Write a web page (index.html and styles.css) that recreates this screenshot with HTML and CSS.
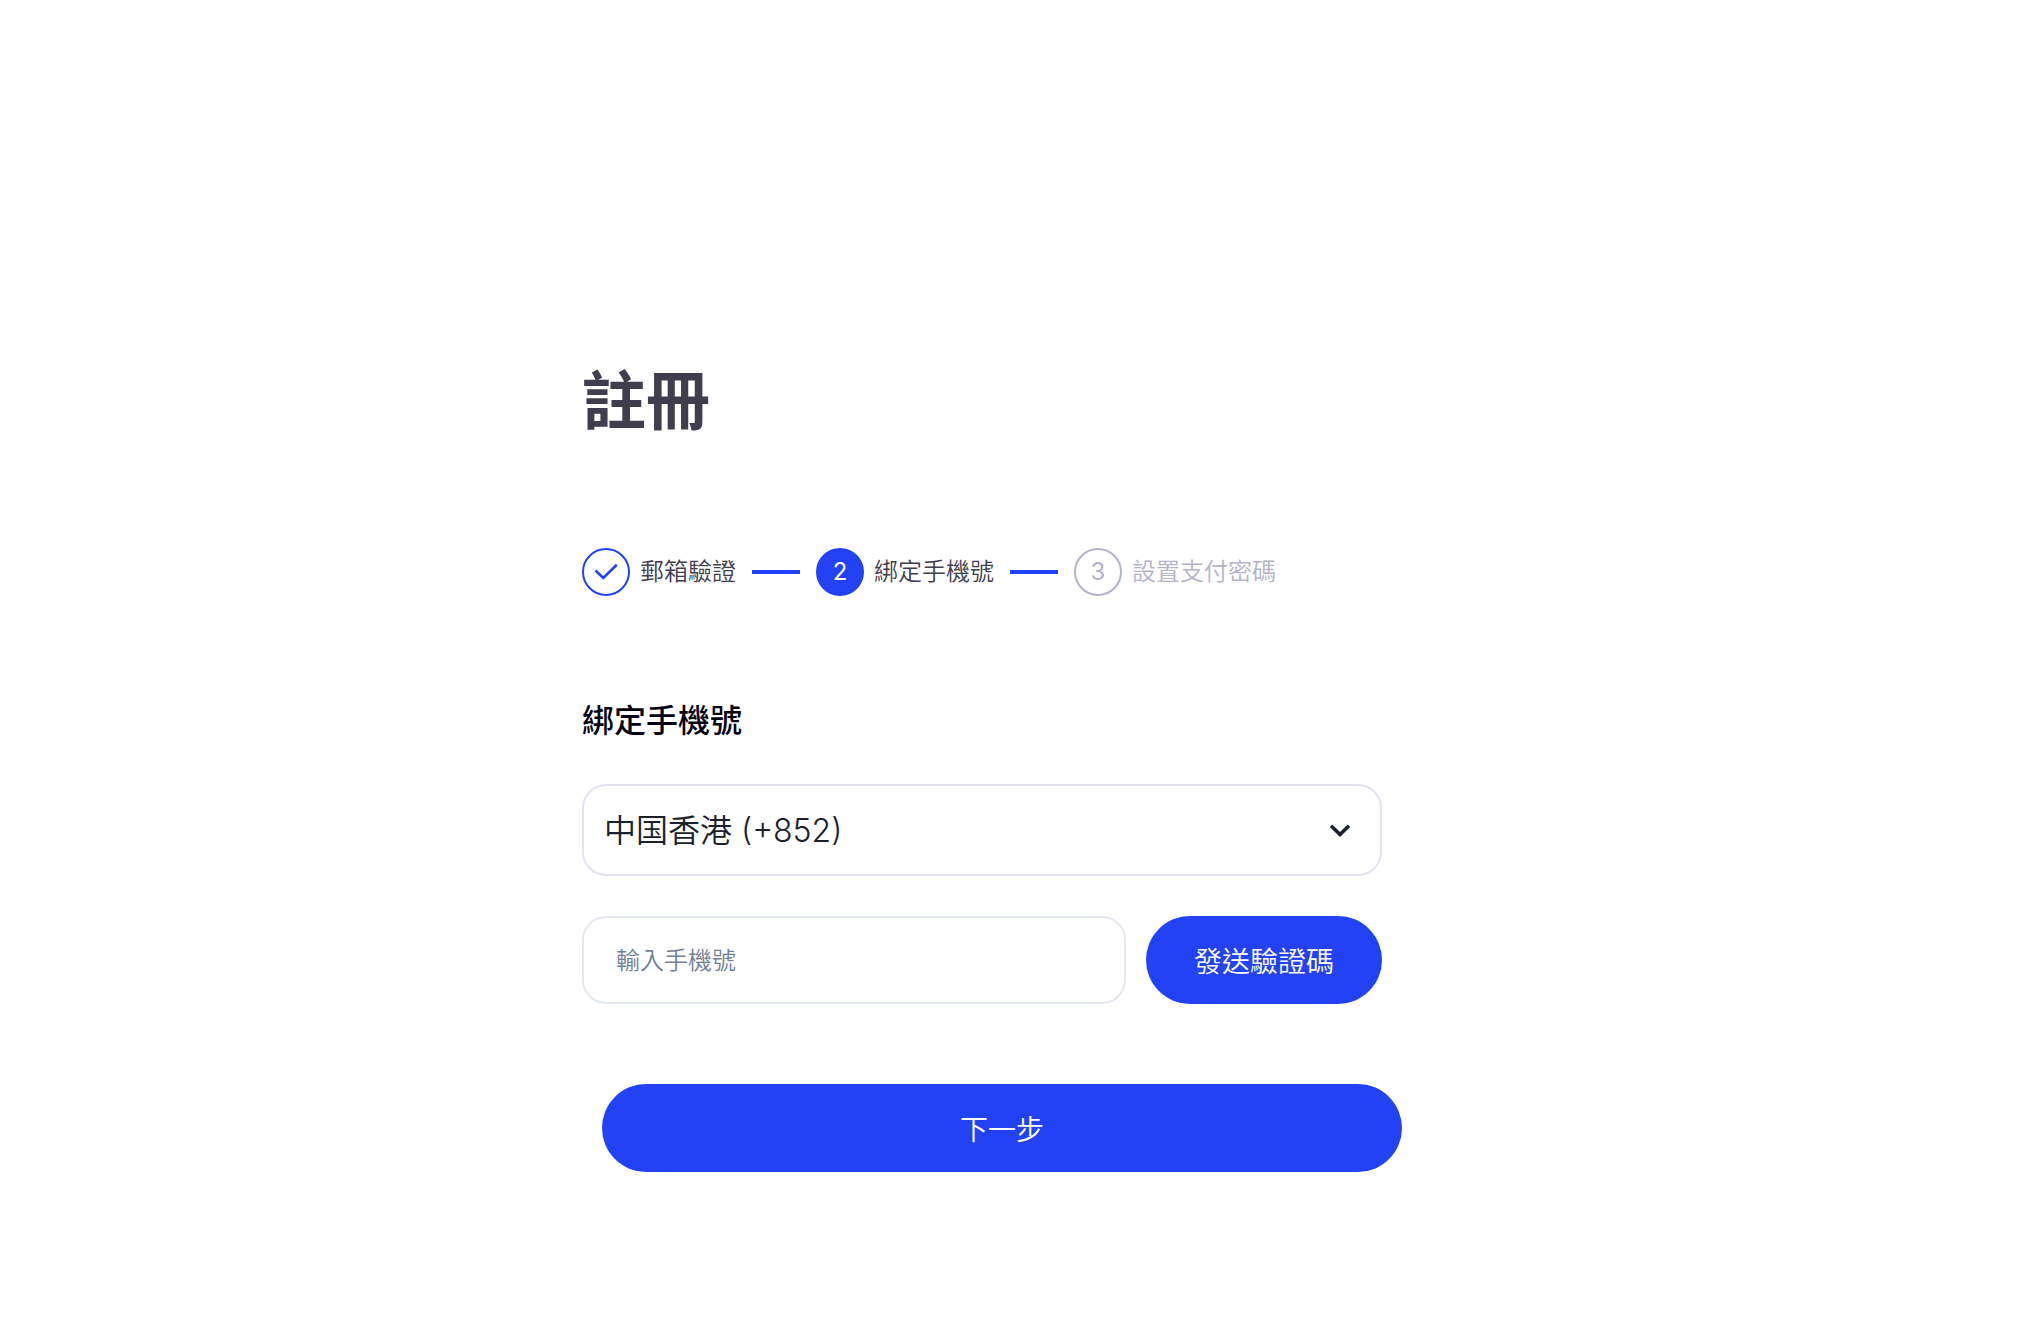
FILE: index.html
```html
<!DOCTYPE html>
<html lang="zh-Hant">
<head>
<meta charset="UTF-8">
<meta name="viewport" content="width=device-width, initial-scale=1">
<title>註冊</title>
<link rel="stylesheet" href="styles.css">
</head>
<body>

<main class="register">
    <h1 class="title">註冊</h1>

    <ol class="steps">
        <li class="step done">
            <span class="circle">
                <svg width="24" height="18" viewBox="0 0 24 18" fill="none" stroke="currentColor" stroke-width="2.6">
                    <path d="M1.5 7.5 9.3 15 22.8 1.8"/>
                </svg>
            </span>
            <span>郵箱驗證</span>
        </li>
        <li class="step active">
            <span class="circle">2</span>
            <span>綁定手機號</span>
        </li>
        <li class="step">
            <span class="circle">3</span>
            <span>設置支付密碼</span>
        </li>
    </ol>

    <form class="form">
        <h2 class="subtitle">綁定手機號</h2>

        <div class="select-wrap">
            <select class="field region" id="region" name="region" aria-label="國家或地區">
                <option value="852">中国香港 (+852)</option>
            </select>
            <svg class="arrow" width="22" height="16" viewBox="0 0 22 16" fill="none" stroke="currentColor" stroke-width="3.6">
                <path d="M2 3.8 11 12.6 20 3.8"/>
            </svg>
        </div>

        <div class="phone-row">
            <input class="field phone" type="tel" id="phone" name="phone" placeholder="輸入手機號" aria-label="手機號">
            <button class="btn" type="button">發送驗證碼</button>
        </div>

        <button class="btn next" type="submit">下一步</button>
    </form>
</main>

</body>
</html>
```

FILE: styles.css
```css
* { box-sizing: border-box; }

body {
    margin: 0;
    background: #fff;
    color: #3f3d4e;
    font-family: Inter, "Noto Sans CJK TC", sans-serif;
    font-weight: 350;
}

.register {
    max-width: 870px;
    margin: 0 auto;
    padding: 353px 0 64px;
}

.title {
    margin: 0 0 99px;
    font-size: 64px;
    line-height: 96px;
    font-weight: 700;
}

/* steps */
.steps {
    display: flex;
    align-items: center;
    gap: 16px;
    margin: 0 0 101px;
    padding: 0;
    list-style: none;
}
.step {
    display: flex;
    align-items: center;
    gap: 10px;
    font-size: 24px;
    line-height: 48px;
    white-space: nowrap;
    color: #b3b3cb;
}
.step + .step::before {
    content: "";
    width: 48px;
    height: 4px;
    margin-right: 6px;
    background: #2442f5;
}
.step.done, .step.active { color: #3f3d4e; }

.circle {
    display: flex;
    align-items: center;
    justify-content: center;
    width: 48px;
    height: 48px;
    border: 2px solid #b3b3cb;
    border-radius: 50%;
    font-weight: 400;
}
.done .circle { border-color: #2442f5; color: #2442f5; }
.active .circle {
    border-color: #2442f5;
    background: #2442f5;
    color: #fff;
}

/* form */
.form { max-width: 800px; }

.subtitle {
    margin: 0 0 39px;
    font-size: 32px;
    line-height: 48px;
    font-weight: 500;
    color: #03000f;
}

.field {
    width: 100%;
    border: 2px solid #e2e8f0;
    border-radius: 24px;
    background: #fff;
    font: inherit;
    outline: none;
}

.select-wrap {
    display: grid;
    align-items: center;
    margin-bottom: 40px;
}
.select-wrap > * { grid-area: 1 / 1; }
.region {
    height: 92px;
    padding: 0 64px 0 20px;
    border-color: #e2e3f1;
    font-size: 32px;
    color: #1a202c;
    appearance: none;
}
.arrow {
    justify-self: end;
    margin-right: 31px;
    color: #1a202c;
    pointer-events: none;
}

.phone-row {
    display: flex;
    gap: 20px;
    margin-bottom: 80px;
}
.phone {
    flex: 1;
    height: 88px;
    padding: 0 32px;
    font-size: 24px;
}
.phone::placeholder { color: #718096; opacity: 1; }

.btn {
    height: 88px;
    padding: 0 48px;
    border: none;
    border-radius: 44px;
    background: #2442f5;
    color: #fff;
    font: inherit;
    font-size: 28px;
    cursor: pointer;
}
.next {
    width: 100%;
    margin-left: 20px;
}
```
